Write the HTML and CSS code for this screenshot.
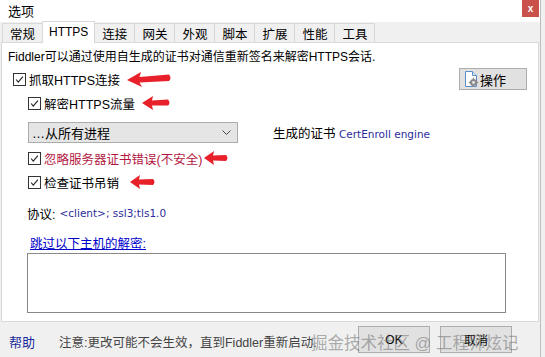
FILE: index.html
```html
<!DOCTYPE html>
<html lang="zh-CN">
<head>
    <meta charset="UTF-8">
    <title>选项</title>
    <link rel="stylesheet" href="styles.css">
</head>
<body>
    <div class="screen">
        <div class="window">
            <!-- Title bar -->
            <div class="titlebar">
                <span class="title">选项</span>
                <span class="close">x</span>
            </div>

            <!-- Tabs -->
            <div class="tabs">
                <span class="tab">常规</span>
                <span class="tab active">HTTPS</span>
                <span class="tab">连接</span>
                <span class="tab">网关</span>
                <span class="tab">外观</span>
                <span class="tab">脚本</span>
                <span class="tab">扩展</span>
                <span class="tab">性能</span>
                <span class="tab">工具</span>
            </div>

            <!-- HTTPS page -->
            <div class="panel">
                <div class="intro">Fiddler可以通过使用自生成的证书对通信重新签名来解密HTTPS会话.</div>

                <div class="row row-capture">
                    <span class="check"><svg viewBox="0 0 13 13"><path d="M2.5 6.5 L5 9.5 L10.5 3" fill="none" stroke="#222" stroke-width="1.3"/></svg></span>
                    <span class="label">抓取HTTPS连接</span>
                    <svg class="arrow arrow-1" viewBox="0 0 44 16"><path d="M0 9 L14 1 L12.5 6 L42 3.5 Q45 7 42 10 L12.5 11.5 L15 16 Z" fill="#e8202a"/></svg>
                    <button class="action">
                        <svg class="action-icon" viewBox="0 0 16 16">
                            <path d="M2.5 0.5 H9.5 L13.5 4.5 V15.5 H2.5 Z" fill="#fff" stroke="#5b8fc7"/>
                            <path d="M9.5 0.5 V4.5 H13.5" fill="#dbe8f5" stroke="#5b8fc7"/>
                            <circle cx="10.5" cy="11.5" r="3.6" fill="#8a8a8a"/>
                            <circle cx="10.5" cy="11.5" r="1.4" fill="#e8e8e8"/>
                            <path d="M10.5 6.8 V8.2 M10.5 14.8 V16 M5.8 11.5 H7.2 M13.8 11.5 H15.2" stroke="#8a8a8a" stroke-width="1.4"/>
                        </svg>
                        操作
                    </button>
                </div>

                <div class="row row-sub row-decrypt">
                    <span class="check"><svg viewBox="0 0 13 13"><path d="M2.5 6.5 L5 9.5 L10.5 3" fill="none" stroke="#222" stroke-width="1.3"/></svg></span>
                    <span class="label">解密HTTPS流量</span>
                    <svg class="arrow arrow-2" viewBox="0 0 28 16"><path d="M0 8 L11 1 L10 5.5 L26 4.5 Q29 8 26 10.5 L10 10.5 L11 15 Z" fill="#e8202a"/></svg>
                </div>

                <div class="row row-sub row-select">
                    <div class="select">
                        <span>…从所有进程</span>
                        <svg class="chevron" viewBox="0 0 9 6"><path d="M0.5 0.5 L4.5 4.5 L8.5 0.5" fill="none" stroke="#444"/></svg>
                    </div>
                    <span class="cert">生成的证书 <span class="cert-name">CertEnroll engine</span></span>
                </div>

                <div class="row row-sub row-ignore">
                    <span class="check"><svg viewBox="0 0 13 13"><path d="M2.5 6.5 L5 9.5 L10.5 3" fill="none" stroke="#222" stroke-width="1.3"/></svg></span>
                    <span class="label warn">忽略服务器证书错误(不安全)</span>
                    <svg class="arrow arrow-3" viewBox="0 0 24 16"><path d="M0 8 L10 1 L9 5.5 L22 5 Q25 8 22 11 L9 10.5 L10 15 Z" fill="#e8202a"/></svg>
                </div>

                <div class="row row-sub row-revoke">
                    <span class="check"><svg viewBox="0 0 13 13"><path d="M2.5 6.5 L5 9.5 L10.5 3" fill="none" stroke="#222" stroke-width="1.3"/></svg></span>
                    <span class="label">检查证书吊销</span>
                    <svg class="arrow arrow-4" viewBox="0 0 25 16"><path d="M0 8 L10 1 L9 5.5 L23 5 Q26 8 23 11 L9 10.5 L10 15 Z" fill="#e8202a"/></svg>
                </div>

                <div class="row protocol">协议: <span class="protocol-value">&lt;client&gt;; ssl3;tls1.0</span></div>

                <div class="row skip"><a href="#" class="skip-link">跳过以下主机的解密:</a></div>

                <textarea class="hosts"></textarea>
            </div>

            <!-- Footer -->
            <div class="footer">
                <a href="#" class="help">帮助</a>
                <span class="note">注意:更改可能不会生效，直到Fiddler重新启动.</span>
                <button class="btn btn-ok">OK</button>
                <button class="btn btn-cancel">取消</button>
                <span class="watermark">掘金技术社区 @ 工程师炫记</span>
            </div>
        </div>
        <div class="side"></div>
    </div>
</body>
</html>
```

FILE: styles.css
```css
* {
    margin: 0;
    padding: 0;
    box-sizing: border-box;
}
body {
    font-family: "Liberation Sans", "Noto Sans CJK SC", sans-serif;
    font-size: 12px;
    color: #000;
    background: #fff;
}
.screen {
    display: flex;
    width: 545px;
    height: 357px;
    overflow: hidden;
}
.window {
    width: 540px;
    display: flex;
    flex-direction: column;
    background: #f0f0f0;
    position: relative;
}
.side {
    flex: 1;
    background: #f0f0f0;
    border-left: 1px solid #bdbdbd;
}

/* Title bar */
.titlebar {
    height: 22px;
    background: #fff;
    display: flex;
    align-items: flex-start;
}
.title {
    font-size: 13px;
    margin: 1px 0 0 8px;
}
.close {
    margin-left: auto;
    margin-right: 1px;
    width: 17px;
    height: 17px;
    background: #c9504b;
    color: #fff;
    font-size: 10px;
    font-weight: bold;
    display: flex;
    align-items: center;
    justify-content: center;
}

/* Tabs */
.tabs {
    height: 20px;
    display: flex;
    align-items: flex-end;
    padding-left: 2px;
    background: #f0f0f0;
    position: relative;
    z-index: 1;
}
.tab {
    height: 19px;
    padding: 0 7px;
    border: 1px solid #d9d9d9;
    border-bottom: none;
    margin-right: -1px;
    background: #f0f0f0;
    display: flex;
    align-items: center;
    font-size: 12.5px;
}
.tab.active {
    height: 22px;
    margin-bottom: -1px;
    background: #fff;
    padding: 0 6px 2px;
    font-size: 12px;
}

/* Page */
.panel {
    height: 280px;
    margin: 0 1px 0 1px;
    background: #fff;
    border: 1px solid #d9d9d9;
    display: flex;
    flex-direction: column;
}
.intro {
    height: 16px;
    line-height: 16px;
    margin: 6px 0 0 6px;
}
.row {
    display: flex;
    align-items: center;
    height: 16px;
}
.row-capture {
    margin: 6px 0 0 11px;
}
.row-sub {
    margin-left: 26px;
}
.row-decrypt { margin-top: 8px; }
.row-select { margin-top: 11px; height: 21px; }
.row-ignore { margin-top: 7px; }
.row-revoke { margin-top: 8px; }

.check {
    width: 13px;
    height: 13px;
    border: 1px solid #333;
    background: #fff;
    display: flex;
}
.check svg {
    width: 11px;
    height: 11px;
}
.label {
    margin-left: 3px;
    font-size: 12.5px;
}
.warn {
    color: #b3173f;
}
.arrow {
    height: 16px;
}
.arrow-1 { width: 44px; margin-left: 7px; }
.arrow-2 { width: 28px; margin-left: 7px; }
.arrow-3 { width: 24px; margin-left: 2px; }
.arrow-4 { width: 25px; margin-left: 11px; }

.action {
    margin-left: auto;
    margin-right: 11px;
    width: 68px;
    height: 22px;
    border: 1px solid #adadad;
    background: #e1e1e1;
    font-family: inherit;
    font-size: 13px;
    display: flex;
    align-items: center;
    padding-left: 3px;
    gap: 1px;
}
.action-icon {
    width: 16px;
    height: 16px;
}

.select {
    width: 210px;
    height: 21px;
    border: 1px solid #acacac;
    background: #e5e5e5;
    display: flex;
    align-items: center;
    padding: 0 6px 0 3px;
    font-size: 13px;
}
.chevron {
    width: 9px;
    height: 6px;
    margin-left: auto;
}
.cert {
    margin-left: 35px;
    font-size: 12.5px;
}
.cert-name {
    color: #2b2b9b;
    font-family: "DejaVu Sans", sans-serif;
    font-size: 10.5px;
}

.protocol {
    margin: 15px 0 0 25px;
    font-size: 12.5px;
}
.protocol-value {
    color: #2b2b9b;
    font-family: "DejaVu Sans", sans-serif;
    font-size: 10.5px;
    margin-left: 4px;
}
.skip {
    margin: 13px 0 0 28px;
}
.skip-link {
    color: #0000cc;
    font-size: 12.5px;
}
.hosts {
    margin: 3px 0 0 25px;
    width: 479px;
    height: 60px;
    border: 1px solid #888;
    resize: none;
}

/* Footer */
.footer {
    flex: 1;
    display: flex;
    align-items: center;
    padding: 4px 0 0 9px;
    position: relative;
}
.help {
    color: #1a2a9c;
    text-decoration: none;
    font-size: 13px;
}
.note {
    margin-left: 24px;
    color: #444;
    font-size: 12.5px;
}
.btn {
    width: 72px;
    height: 27px;
    border: 1px solid #adadad;
    background: #e1e1e1;
    font-family: inherit;
    font-size: 12px;
    align-self: flex-end;
    margin-bottom: 4px;
}
.btn-ok {
    margin-left: auto;
}
.btn-cancel {
    margin-left: 10px;
    margin-right: 28px;
}
.watermark {
    position: absolute;
    left: 311px;
    top: 8px;
    font-size: 16.5px;
    color: rgba(110, 110, 110, 0.55);
    white-space: nowrap;
}
```
